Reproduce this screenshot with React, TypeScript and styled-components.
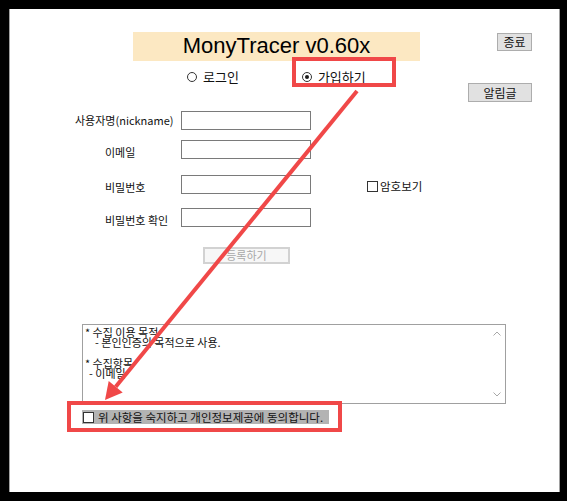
import styled, { createGlobalStyle } from "styled-components";

const GlobalStyle = createGlobalStyle`
  html, body {
    margin: 0;
    padding: 0;
    background: #000;
  }
  body {
    font-family: "Noto Sans CJK KR", "Noto Sans", sans-serif;
    color: #111;
  }
`;

const Screen = styled.div`
  position: relative;
  width: 567px;
  height: 501px;
  padding: 9px 7px 9px 9px;
  box-sizing: border-box;
  background: #000;
`;

const Window = styled.div`
  display: flex;
  flex-direction: column;
  height: 100%;
  box-sizing: border-box;
  padding: 23px 27px 0 0;
  background: #fff;
  border-left: 1px solid #a0a0a0;
  border-right: 1px solid #a0a0a0;
`;

const TopArea = styled.div`
  display: flex;
  align-items: flex-start;
`;

const MainTop = styled.div`
  display: flex;
  flex-direction: column;
  flex: 1;
`;

const Side = styled.div`
  display: flex;
  flex-direction: column;
  align-items: flex-end;
  padding-top: 1px;
  gap: 32px;
`;

const Banner = styled.div`
  margin-left: 123px;
  width: 287px;
  height: 29px;
  display: flex;
  align-items: center;
  justify-content: center;
  background: #fce8c2;
  font-family: "Liberation Sans", Arial, sans-serif;
  font-size: 22px;
  color: #000;
  padding-bottom: 1px;
  box-sizing: border-box;
`;

const WinButton = styled.button<{ $w: number; $h: number }>`
  width: ${({ $w }) => $w}px;
  height: ${({ $h }) => $h}px;
  padding: 0;
  background: #e1e1e1;
  border: 1px solid #adadad;
  border-radius: 0;
  font-family: "Noto Sans CJK KR", sans-serif;
  font-size: 12px;
  line-height: 1;
  color: #111;
`;

const RadioRow = styled.div`
  display: flex;
  align-items: center;
  height: 22px;
  margin-top: 5px;
  padding-left: 177px;
  gap: 63px;
`;

const RadioItem = styled.label`
  display: flex;
  align-items: center;
  gap: 6px;
  font-size: 13px;
  line-height: 22px;
`;

const RadioCircle = styled.span<{ $checked?: boolean }>`
  width: 10px;
  height: 10px;
  box-sizing: border-box;
  border-radius: 50%;
  border: 1px solid #333;
  background: #fff;
  display: flex;
  align-items: center;
  justify-content: center;

  &::after {
    content: "";
    display: ${({ $checked }) => ($checked ? "block" : "none")};
    width: 4px;
    height: 4px;
    border-radius: 50%;
    background: #1a1a1a;
  }
`;

const FormRow = styled.div<{ $top: number }>`
  display: flex;
  align-items: flex-start;
  margin-top: ${({ $top }) => $top}px;
  height: 19px;
`;

const Label = styled.span<{ $indent: number; $shift: number }>`
  width: 171px;
  box-sizing: border-box;
  padding-left: ${({ $indent }) => $indent}px;
  padding-top: ${({ $shift }) => $shift}px;
  font-size: 11px;
  line-height: 19px;
  white-space: nowrap;
`;

const TextBox = styled.input`
  width: 130px;
  height: 19px;
  box-sizing: border-box;
  margin: 0;
  padding: 0 2px;
  border: 1px solid #7a7a7a;
  background: #fff;
  font-size: 11px;
  outline: none;
`;

const CheckOption = styled.label`
  display: flex;
  align-items: center;
  height: 19px;
  margin-left: 56px;
  padding-top: 2px;
  gap: 2px;
  font-size: 11.5px;
  line-height: 19px;
`;

const CheckBox = styled.span`
  width: 11px;
  height: 11px;
  box-sizing: border-box;
  border: 1px solid #333;
  background: #fff;
  flex-shrink: 0;
`;

const RegisterButton = styled.button`
  margin: 20px 0 0 193px;
  width: 87px;
  height: 17px;
  padding: 0;
  box-sizing: border-box;
  background: #f7f7f7;
  border: 2px solid #d2d2d2;
  border-radius: 0;
  font-family: "Noto Sans CJK KR", sans-serif;
  font-size: 11px;
  line-height: 1;
  color: #a8a8a8;
`;

const Notice = styled.div`
  display: flex;
  margin: 59px 0 0 72px;
  width: 424px;
  height: 80px;
  box-sizing: border-box;
  border: 1px solid #a0a0a0;
  background: #fff;
`;

const NoticeText = styled.div`
  flex: 1;
  padding: 1.5px 2px;
  font-size: 11px;
  line-height: 10.4px;
`;

const NoticeLine = styled.div<{ $indent?: number }>`
  height: 10.4px;
  padding-left: ${({ $indent }) => $indent ?? 0}px;
  white-space: nowrap;
`;

const ScrollBar = styled.div`
  width: 17px;
  display: flex;
  flex-direction: column;
  justify-content: space-between;
`;

const ScrollArrow = styled.div`
  height: 17px;
  display: flex;
  align-items: center;
  justify-content: center;
`;

const AgreeRow = styled.label`
  display: flex;
  align-items: center;
  margin: 6px 0 0 72px;
  width: 247px;
  height: 14px;
  padding-left: 1px;
  gap: 4px;
  box-sizing: border-box;
  background: #b3b3b3;
  font-size: 11.5px;
  line-height: 14px;
  white-space: nowrap;
`;

const Overlay = styled.svg`
  position: absolute;
  left: 0;
  top: 0;
  pointer-events: none;
`;

const Chevron = ({ down }: { down?: boolean }) => (
  <svg width="8" height="5" viewBox="0 0 8 5">
    <polyline
      points={down ? "0.5,0.5 4,4 7.5,0.5" : "0.5,4.5 4,1 7.5,4.5"}
      fill="none"
      stroke="#a8a8a8"
      strokeWidth="1"
    />
  </svg>
);

const fields = [
  { label: "사용자명(nickname)", indent: 65, shift: 0, top: 23, type: "text" },
  { label: "이메일", indent: 95, shift: 3, top: 10, type: "text" },
  { label: "비밀번호", indent: 95, shift: 3, top: 16, type: "password" },
  { label: "비밀번호 확인", indent: 95, shift: 3, top: 14, type: "password" },
];

export default function App() {
  return (
    <>
      <GlobalStyle />
      <Screen>
        <Window>
          <TopArea>
            <MainTop>
              <Banner>MonyTracer v0.60x</Banner>
              <RadioRow>
                <RadioItem>
                  <RadioCircle />
                  로그인
                </RadioItem>
                <RadioItem>
                  <RadioCircle $checked />
                  가입하기
                </RadioItem>
              </RadioRow>
              {fields.map((f, i) => (
                <FormRow key={f.label} $top={f.top}>
                  <Label $indent={f.indent} $shift={f.shift}>
                    {f.label}
                  </Label>
                  <TextBox type={f.type} />
                  {i === 2 && (
                    <CheckOption>
                      <CheckBox />
                      암호보기
                    </CheckOption>
                  )}
                </FormRow>
              ))}
            </MainTop>
            <Side>
              <WinButton $w={35} $h={18}>종료</WinButton>
              <WinButton $w={64} $h={19}>알림글</WinButton>
            </Side>
          </TopArea>

          <div>
            <RegisterButton disabled>등록하기</RegisterButton>
          </div>

          <Notice>
            <NoticeText>
              <NoticeLine>* 수집 이용 목적</NoticeLine>
              <NoticeLine $indent={10}>- 본인인증의 목적으로 사용.</NoticeLine>
              <NoticeLine />
              <NoticeLine>* 수집항목</NoticeLine>
              <NoticeLine $indent={4}>- 이메일</NoticeLine>
            </NoticeText>
            <ScrollBar>
              <ScrollArrow>
                <Chevron />
              </ScrollArrow>
              <ScrollArrow>
                <Chevron down />
              </ScrollArrow>
            </ScrollBar>
          </Notice>

          <AgreeRow>
            <CheckBox />
            위 사항을 숙지하고 개인정보제공에 동의합니다.
          </AgreeRow>
        </Window>

        <Overlay width="567" height="501" viewBox="0 0 567 501">
          <rect x="294" y="59" width="100" height="26" fill="none" stroke="#f04848" strokeWidth="4" />
          <rect x="69" y="403" width="271" height="27" fill="none" stroke="#f04848" strokeWidth="4" />
          <line x1="357" y1="91" x2="115.7" y2="386.8" stroke="#f04848" strokeWidth="4" />
          <polygon points="105,400 122.7,392.5 108.7,381.1" fill="#f04848" />
        </Overlay>
      </Screen>
    </>
  );
}
